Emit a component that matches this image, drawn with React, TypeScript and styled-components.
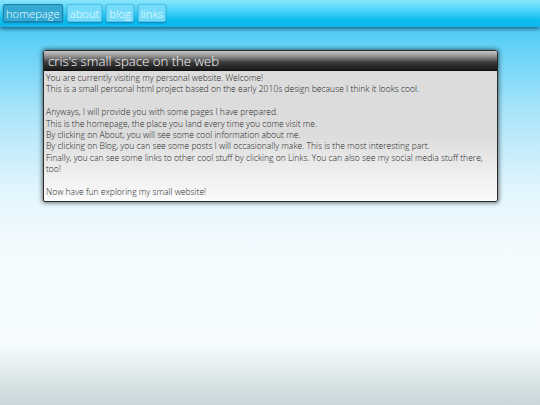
import React from "react";
import styled, { createGlobalStyle } from "styled-components";

const Global = createGlobalStyle`
  html, body { margin: 0; padding: 0; height: 100%; }
  body {
    font-family: "Open Sans", "Liberation Sans", sans-serif;
    background: linear-gradient(to bottom,
      #3cc8f4 0px, #5ccff6 40px, #a8e4fa 110px, #e2f5fd 190px, #f4fbfe 250px,
      #f5fbfe 345px, #e6eef0 368px, #d4e0e0 388px, #c9d5da 405px);
    min-height: 405px;
  }
  #root { min-height: 405px; }
`;

const Page = styled.div`
  display: flex;
  flex-direction: column;
  min-height: 405px;
`;

const NavBar = styled.nav`
  height: 27px;
  box-sizing: border-box;
  display: flex;
  align-items: flex-start;
  gap: 4px;
  padding: 4px 3px 0;
  background: linear-gradient(to bottom, #8ae6fc 0%, #3fd0f8 45%, #0cbcef 75%, #12b6ea 100%);
  box-shadow: 0 2px 4px rgba(0, 40, 70, 0.65);
  position: relative;
  z-index: 1;
`;

const NavButton = styled.a<{ $active?: boolean }>`
  display: block;
  height: 18px;
  box-sizing: border-box;
  padding: 0 2px;
  font-family: "Open Sans", sans-serif;
  font-weight: 300;
  font-size: 11.2px;
  line-height: 17px;
  color: #f2fcff;
  text-decoration: none;
  border-radius: 2px;
  border: 1px solid ${(p) => (p.$active ? "#1f7fa6" : "#58c4ea")};
  background: ${(p) => (p.$active ? "#33a9d3" : "#74dcfa")};
  box-shadow: 0 1px 2px rgba(0, 60, 100, 0.45);
`;

const Main = styled.main`
  padding: 23px 43px 0 43px;
`;

const Panel = styled.section`
  width: 455px;
  box-sizing: border-box;
  border: 1px solid #2a2a2a;
  border-radius: 3px 3px 2px 2px;
  overflow: hidden;
  box-shadow: 0 0 4px 1px rgba(0, 0, 0, 0.55);
  background: linear-gradient(to bottom, #dcdcdc 0%, #dcdcdc 55%, #fbfbfb 100%);
`;

const TitleBar = styled.h1`
  margin: 0;
  height: 19px;
  padding: 0 4px;
  font-family: "Open Sans", sans-serif;
  font-weight: 300;
  font-size: 13.2px;
  line-height: 20px;
  color: #ffffff;
  background: linear-gradient(to bottom, #c8c8c8 0%, #8c8c8c 30%, #3a3a3a 60%, #1a1a1a 100%);
  border-bottom: 1px solid #111;
  white-space: nowrap;
`;

const Content = styled.div`
  padding: 2px 8px 3px 2px;
  font-family: "Open Sans", sans-serif;
  font-weight: 300;
  font-size: 8.56px;
  line-height: 11.4px;
  color: #1e1e1e;
`;

const Para = styled.p`
  margin: 0 0 11.4px;
  &:last-child { margin-bottom: 0; }
`;

export default function App() {
  return (
    <>
      <Global />
      <Page>
        <NavBar>
          <NavButton href="#" $active>homepage</NavButton>
          <NavButton href="#">about</NavButton>
          <NavButton href="#">blog</NavButton>
          <NavButton href="#">links</NavButton>
        </NavBar>
        <Main>
          <Panel>
            <TitleBar>cris's small space on the web</TitleBar>
            <Content>
              <Para>
                You are currently visiting my personal website. Welcome!
                <br />
                This is a small personal html project based on the early 2010s design because I think it looks cool.
              </Para>
              <Para>
                Anyways, I will provide you with some pages I have prepared.
                <br />
                This is the homepage, the place you land every time you come visit me.
                <br />
                By clicking on About, you will see some cool information about me.
                <br />
                By clicking on Blog, you can see some posts I will occasionally make. This is the most interesting part.
                <br />
                Finally, you can see some links to other cool stuff by clicking on Links. You can also see my social media stuff there, too!
              </Para>
              <Para>Now have fun exploring my small website!</Para>
            </Content>
          </Panel>
        </Main>
      </Page>
    </>
  );
}
